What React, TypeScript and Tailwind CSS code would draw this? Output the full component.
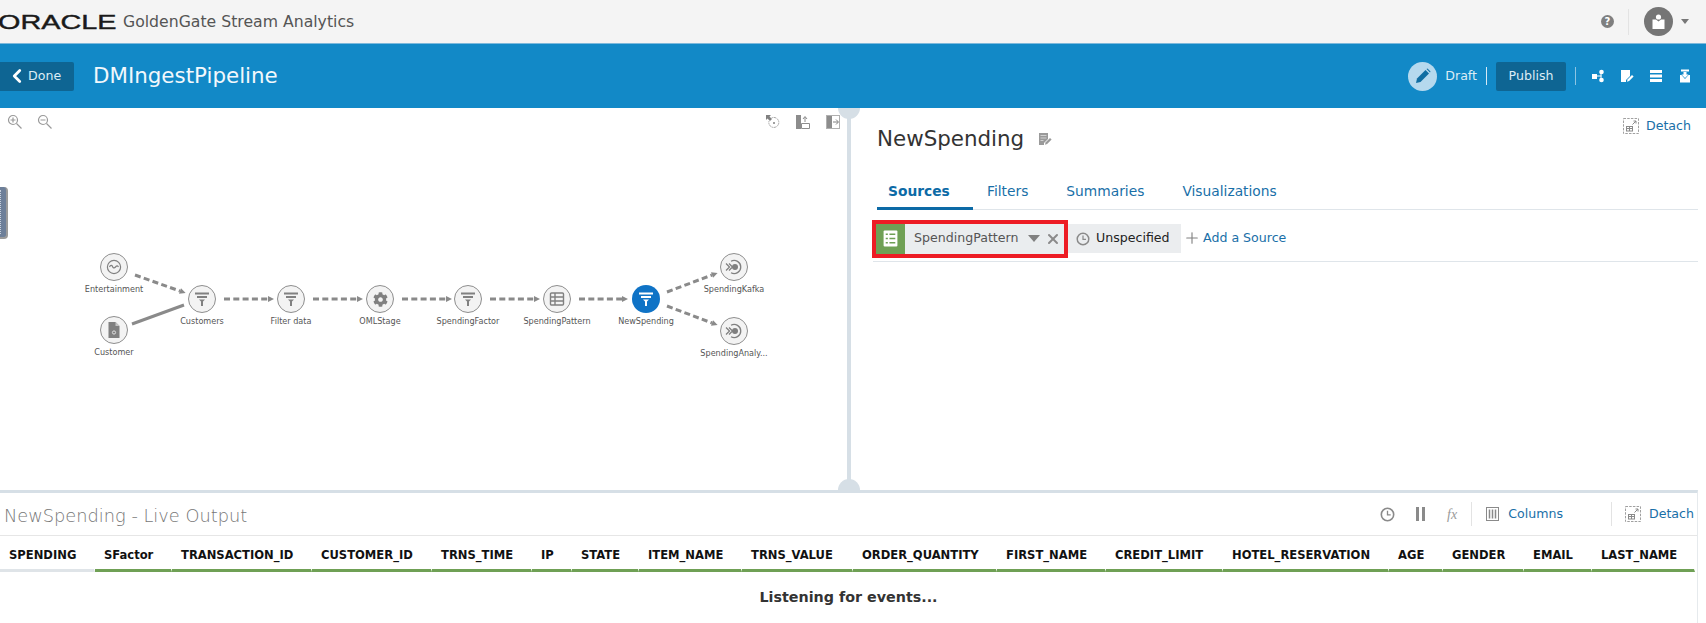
import { ChevronLeft, Plus, X } from 'lucide-react';
import { FaCog } from 'react-icons/fa';

const font = { fontFamily: '"DejaVu Sans", sans-serif' };

function FilterIcon({ light }: { light?: boolean }) {
  const c = light ? '#ffffff' : '#808080';
  return (
    <svg width="16" height="16" viewBox="0 0 16 16">
      <rect x="1" y="1.500" width="14" height="2" fill={c} />
      <rect x="3" y="5" width="10" height="2" fill={c} />
      <path d="M5 8.500h6l-2 2v4.500h-2v-4.500z" fill={c} />
    </svg>
  );
}

function TableIcon() {
  return (
    <svg width="16" height="16" viewBox="0 0 16 16" fill="none" stroke="#808080" strokeWidth="1.400">
      <rect x="1.500" y="2" width="13" height="12" rx="1" />
      <path d="M1.500 6h13M1.500 10h13M6 2v12" />
    </svg>
  );
}

function StreamIcon() {
  return (
    <svg width="16" height="16" viewBox="0 0 16 16" fill="none" stroke="#808080" strokeWidth="1.200">
      <circle cx="8" cy="8" r="6.600" />
      <path d="M3.500 8c1-2 2.400-2 3-.6s1.600 2.200 3 .6 2-1.400 3 0" />
    </svg>
  );
}

function FileIcon() {
  return (
    <svg width="16" height="18" viewBox="0 0 16 18">
      <path d="M2.500 1h7l4 4v12h-11z" fill="#808080" />
      <path d="M9.500 1v4h4" fill="#c4c4c4" />
      <circle cx="8" cy="11.500" r="1.600" fill="none" stroke="#e8e8e8" strokeWidth=".9" />
    </svg>
  );
}

function TargetIcon() {
  return (
    <svg width="18" height="16" viewBox="0 0 18 16" fill="none" stroke="#808080" strokeWidth="1.300">
      <path d="M6 2.200A6.600 6.600 0 1 1 6 13.800" />
      <circle cx="10" cy="8" r="3" fill="#808080" stroke="none" />
      <path d="M1 4.500 4.500 8 1 11.500M4 4.500 7.500 8 4 11.500" />
    </svg>
  );
}

const nodes = [
  { label: 'Entertainment', pos: 'left-[64px] top-[145px]', icon: <StreamIcon /> },
  { label: 'Customer', pos: 'left-[64px] top-[208px]', icon: <FileIcon /> },
  { label: 'Customers', pos: 'left-[152px] top-[177px]', icon: <FilterIcon /> },
  { label: 'Filter data', pos: 'left-[241px] top-[177px]', icon: <FilterIcon /> },
  { label: 'OMLStage', pos: 'left-[330px] top-[177px]', icon: <FaCog size={15} color="#808080" /> },
  { label: 'SpendingFactor', pos: 'left-[418px] top-[177px]', icon: <FilterIcon /> },
  { label: 'SpendingPattern', pos: 'left-[507px] top-[177px]', icon: <TableIcon /> },
  { label: 'NewSpending', pos: 'left-[596px] top-[177px]', icon: <FilterIcon light />, active: true },
  { label: 'SpendingKafka', pos: 'left-[684px] top-[145px]', icon: <TargetIcon /> },
  { label: 'SpendingAnaly...', pos: 'left-[684px] top-[209px]', icon: <TargetIcon /> },
];

const edges = [
  { x1: 135, y1: 167, x2: 180, y2: 183 },
  { x1: 132, y1: 216, x2: 184, y2: 197, solid: true },
  { x1: 224, y1: 191, x2: 268, y2: 191 },
  { x1: 313, y1: 191, x2: 357, y2: 191 },
  { x1: 402, y1: 191, x2: 446, y2: 191 },
  { x1: 490, y1: 191, x2: 534, y2: 191 },
  { x1: 579, y1: 191, x2: 622, y2: 191 },
  { x1: 667, y1: 184, x2: 712, y2: 167 },
  { x1: 667, y1: 198, x2: 712, y2: 215 },
];

const columns = [
  { name: 'SPENDING', w: 'w-[95px]', bar: 'border-b-[#dfe4e8]' },
  { name: 'SFactor', w: 'w-[77px]' },
  { name: 'TRANSACTION_ID', w: 'w-[140px]' },
  { name: 'CUSTOMER_ID', w: 'w-[120px]' },
  { name: 'TRNS_TIME', w: 'w-[100px]' },
  { name: 'IP', w: 'w-[40px]' },
  { name: 'STATE', w: 'w-[67px]' },
  { name: 'ITEM_NAME', w: 'w-[103px]' },
  { name: 'TRNS_VALUE', w: 'w-[111px]' },
  { name: 'ORDER_QUANTITY', w: 'w-[144px]' },
  { name: 'FIRST_NAME', w: 'w-[109px]' },
  { name: 'CREDIT_LIMIT', w: 'w-[117px]' },
  { name: 'HOTEL_RESERVATION', w: 'w-[166px]' },
  { name: 'AGE', w: 'w-[54px]' },
  { name: 'GENDER', w: 'w-[81px]' },
  { name: 'EMAIL', w: 'w-[68px]' },
  { name: 'LAST_NAME', w: 'w-[103px]' },
];

function DetachIcon() {
  return (
    <svg width="16" height="16" viewBox="0 0 16 16" fill="none" stroke="#8a8a8a" strokeWidth="1">
      <rect x=".5" y=".5" width="15" height="15" strokeDasharray="2.500 1.200" stroke="#a0a0a0" />
      <rect x="3.500" y="8.500" width="6" height="4.500" fill="#fff" />
      <path d="M3.500 10.500h6M6.500 8.500v4.500M9.500 6.500l3.500-3.500M10.500 3H13v2.500" />
    </svg>
  );
}

function EditDocIcon({ color }: { color: string }) {
  return (
    <svg width="14" height="14" viewBox="0 0 14 14">
      <path d="M1 1h9v6l-4 4v2H1z" fill={color} />
      <path d="M2.500 3.500h6M2.500 6h6M2.500 8.500h3" stroke="#fff" strokeWidth="1" opacity=".55" />
      <path d="M7 12.800 7.500 10.500 12 6l1.600 1.600-4.500 4.500z" fill={color} />
    </svg>
  );
}

function ClockIcon({ color, size }: { color: string; size: number }) {
  return (
    <svg width={size} height={size} viewBox="0 0 16 16" fill="none" stroke={color} strokeWidth="1.700">
      <circle cx="8" cy="8" r="6.600" />
      <path d="M8 4v4.400h3.400" strokeWidth="1.400" />
    </svg>
  );
}

function GraphIcon() {
  return (
    <svg width="14" height="14" viewBox="0 0 14 14" fill="#fff">
      <rect x="1" y="5" width="5" height="5" />
      <circle cx="10.500" cy="3" r="2.300" />
      <circle cx="10.500" cy="11" r="2.300" />
      <path d="M6 7h4.500M10 3v8" stroke="#fff" strokeWidth="1" />
    </svg>
  );
}

function ListIcon() {
  return (
    <svg width="14" height="14" viewBox="0 0 14 14" fill="#fff">
      <rect x="1" y="1" width="12" height="3" />
      <rect x="1" y="5.500" width="12" height="3" />
      <rect x="1" y="10" width="12" height="3" />
    </svg>
  );
}

function TrayIcon() {
  return (
    <svg width="14" height="14" viewBox="0 0 14 14" fill="#fff">
      <rect x="3" y="0.500" width="8" height="2" />
      <path d="M5.500 3h3v2.500h2L7 9 3.500 5.500h2z" />
      <path d="M2 6h1.500L7 10l3.500-4H12v7.500H2z" />
    </svg>
  );
}

export default function App() {
  return (
    <div className="w-[1706px] h-[623px] overflow-hidden bg-white" style={font}>
      <header className="h-[44px] bg-[#f4f4f4] border-b border-[#7db9dc] flex items-center overflow-hidden">
        <span className="w-[121px] shrink-0 -ml-[2px] origin-left scale-x-[1.44] text-[20px] leading-none text-[#1a1a1a] [-webkit-text-stroke:0.4px_#1a1a1a] [font-family:'Liberation_Sans',sans-serif]">
          ORACLE
        </span>
        <span className="ml-[4px] text-[15.7px] text-[#555555]">GoldenGate Stream Analytics</span>
        <div className="ml-auto flex items-center pr-[17px]">
          <span className="w-[13px] h-[13px] rounded-full bg-[#7f7f7f] text-white text-[10px] leading-[13px] font-bold text-center">?</span>
          <span className="ml-[14px] w-px h-[26px] bg-[#e3e3e3]" />
          <span className="ml-[15px] w-[29px] h-[29px] rounded-full bg-[#757575] flex items-center justify-center">
            <svg width="15" height="15" viewBox="0 0 15 15" fill="#fff">
              <circle cx="7.500" cy="3" r="2.600" />
              <path d="M1.500 5.500h3.500l2.500 2 2.500-2h3.500V15h-12z" />
            </svg>
          </span>
          <span className="ml-[8px] w-0 h-0 border-x-[4px] border-x-transparent border-t-[5px] border-t-[#777777]" />
        </div>
      </header>

      <div className="relative z-10 h-[64px] bg-[#1289c7] flex items-center">
        <button className="w-[74px] h-[29px] bg-[#0e6593] rounded-r-[2px] flex items-center pl-[6px] text-[12.6px]">
          <ChevronLeft size={22} strokeWidth={3} color="#fff" />
          <span className="text-[#dcecf5]">Done</span>
        </button>
        <h1 className="ml-[19px] text-[21.400px] leading-[28px] -mt-[1px] text-[#f2f8fc]">DMIngestPipeline</h1>
        <div className="ml-auto flex items-center pr-[14px]">
          <span className="w-[29px] h-[29px] rounded-full bg-[#b5d9ee] flex items-center justify-center">
            <svg width="16" height="16" viewBox="0 0 16 16" fill="#0f6ea3">
              <path d="M1 15l1-4.500L10.500 2 14 5.500 5.500 14z" />
              <path d="M11.500 1l1-.5 3 3-.5 1z" />
            </svg>
          </span>
          <span className="ml-[8px] text-[12.6px] text-[#dcecf5]">Draft</span>
          <span className="ml-[9px] w-px h-[18px] bg-[#d6e9f5]" />
          <button className="ml-[9px] w-[70px] h-[29px] bg-[#0e6593] rounded-[2px] text-[12.6px] text-[#dcecf5]">Publish</button>
          <span className="ml-[9px] w-px h-[18px] bg-[#8cc4e3]" />
          <span className="ml-[15px] flex items-center gap-[15px]">
            <GraphIcon />
            <EditDocIcon color="#ffffff" />
            <ListIcon />
            <TrayIcon />
          </span>
        </div>
      </div>

      <div className="h-[382px] flex">
        <section className="relative w-[847px] shrink-0">
          <div className="flex items-center justify-between pl-[7px] pt-[6px] pr-0">
            <div className="flex gap-[14px]">
              <svg width="16" height="16" viewBox="0 0 16 16" fill="none" stroke="#9a9a9a" strokeWidth="1.200">
                <circle cx="6" cy="6" r="4.500" />
                <path d="M6 3.500v5M3.500 6h5M9.500 9.500l5 5" />
              </svg>
              <svg width="16" height="16" viewBox="0 0 16 16" fill="none" stroke="#9a9a9a" strokeWidth="1.200">
                <circle cx="6" cy="6" r="4.500" />
                <path d="M3.500 6h5M9.500 9.500l5 5" />
              </svg>
            </div>
            <div className="flex gap-[16px] pr-[7px]">
              <svg width="14" height="14" viewBox="0 0 14 14" fill="none">
                <path d="M5.500 3a5 5 0 1 1-2.500 3" stroke="#a8a8a8" strokeWidth="1" strokeDasharray="2 .6" />
                <circle cx="8" cy="8" r="1" fill="#808080" />
                <path d="M0 0h5L3.500 1.500 6 4 4 6 1.500 3.500 0 5z" fill="#808080" />
              </svg>
              <svg width="14" height="14" viewBox="0 0 14 14" fill="none">
                <path d="M0 0h5v14H0z" fill="#8c8c8c" />
                <path d="M5.500 8.500h8V13.500H5.500z" stroke="#8c8c8c" />
                <path d="M9 7V2M7 4l2-2.500L11 4" stroke="#8c8c8c" />
              </svg>
              <svg width="14" height="14" viewBox="0 0 14 14" fill="none">
                <path d="M0 0h6v14H0z" fill="#8c8c8c" />
                <rect x=".5" y=".5" width="13" height="13" stroke="#b0b0b0" />
                <path d="M7 7h5M10 4.500 12.500 7 10 9.500" stroke="#808080" />
              </svg>
            </div>
          </div>

          <div className="absolute left-0 top-[79px] w-[8px] h-[52px] rounded-r-[4px] bg-[#6d7f99] border-r-[2px] border-b-[2px] border-[#9a9a9a]">
            <span className="absolute left-0 top-[3px] bottom-[3px] border-l border-dotted border-[#c8d0dc]" />
          </div>

          <svg className="absolute inset-0" width="847" height="382" fill="none">
            {edges.map(e => {
              const a = Math.atan2(e.y2 - e.y1, e.x2 - e.x1);
              const tx = e.x2 + Math.cos(a) * 6;
              const ty = e.y2 + Math.sin(a) * 6;
              const nx = Math.sin(a) * 3;
              const ny = Math.cos(a) * 3;
              return (
                <g key={`${e.x1}-${e.y1}`}>
                  <line x1={e.x1} y1={e.y1} x2={e.x2} y2={e.y2} stroke="#8a8a8a" strokeWidth="3" strokeDasharray={e.solid ? undefined : '6 3.300'} />
                  {!e.solid && <polygon points={`${tx},${ty} ${e.x2 + nx},${e.y2 - ny} ${e.x2 - nx},${e.y2 + ny}`} fill="#8a8a8a" />}
                </g>
              );
            })}
          </svg>

          {nodes.map(n => (
            <div key={n.label} className={`absolute w-[100px] flex flex-col items-center ${n.pos}`}>
              <div
                className={`w-[28px] h-[28px] rounded-full flex items-center justify-center ${
                  n.active ? 'bg-[#0f73c6]' : 'bg-[#f3f3f3] border-[1.5px] border-[#8e8e8e]'
                }`}
              >
                {n.icon}
              </div>
              <span className="mt-[2px] text-[8.1px] leading-[12px] text-[#555555] whitespace-nowrap">{n.label}</span>
            </div>
          ))}
        </section>

        <div className="relative w-[4px] shrink-0 bg-[#d6dfe6]">
          <span className="absolute -left-[9px] -top-[11px] w-[22px] h-[22px] rounded-full bg-[#d6dfe6]" />
          <span className="absolute -left-[9px] -bottom-[11px] w-[22px] h-[22px] rounded-full bg-[#d6dfe6]" />
        </div>

        <section className="flex-1 min-w-0 pl-[26px] pr-[8px] overflow-hidden">
          <div className="h-[61px] flex items-start relative">
            <h2 className="mt-[17px] text-[21.4px] leading-[28px] text-[#333333]">NewSpending</h2>
            <span className="ml-[14px] mt-[24px]">
              <EditDocIcon color="#9a9a9a" />
            </span>
            <div className="ml-auto mt-[9px] flex items-center pr-[7px]">
              <DetachIcon />
              <span className="ml-[7px] text-[12.6px] text-[#196fa8]">Detach</span>
            </div>
          </div>

          <nav className="h-[41px] flex border-b border-[#dfe5ea] text-[13.8px] text-[#196fa8]">
            <span className="w-[96px] h-[41px] pl-[11px] pt-[12px] font-bold text-[#0c6aa6] border-b-[3px] border-[#0c6aa6]">Sources</span>
            <span className="ml-[14px] pt-[12px]">Filters</span>
            <span className="ml-[38px] pt-[12px]">Summaries</span>
            <span className="ml-[38px] pt-[12px]">Visualizations</span>
          </nav>

          <div className="h-[52px] -ml-[4px] pt-[6px] flex items-center border-b border-[#dfe5ea]">
            <div className="-ml-[1px] w-[196px] h-[38px] border-[4px] border-[#ed1c24] flex shrink-0">
              <span className="w-[29px] bg-[#6fa055] flex items-center justify-center">
                <svg width="15" height="17" viewBox="0 0 14 16">
                  <rect x=".5" y=".5" width="13" height="15" rx="1" fill="#ffffff" />
                  <path d="M2.500 4h2M6 4h5.500M2.500 8h2M6 8h5.500M2.500 12h2M6 12h5.500" stroke="#6fa055" strokeWidth="1.500" />
                </svg>
              </span>
              <span className="flex-1 bg-[#eaedef] flex items-center pl-[9px] text-[12.6px] text-[#555555]">
                SpendingPattern
                <span className="ml-[9px] w-0 h-0 border-x-[6px] border-x-transparent border-t-[7px] border-t-[#808080]" />
                <X size={16} strokeWidth={3} color="#8a8a8a" className="ml-[5px]" />
              </span>
            </div>
            <div className="w-[113px] h-[29px] bg-[#ebedef] flex items-center pl-[8px] text-[12.6px] text-[#222222] shrink-0">
              <ClockIcon color="#8a8a8a" size={14} />
              <span className="ml-[6px]">Unspecified</span>
            </div>
            <span className="ml-[2px] flex items-center text-[12.6px] text-[#196fa8]">
              <Plus size={18} strokeWidth={1.500} color="#808080" />
              <span className="ml-[2px]">Add a Source</span>
            </span>
          </div>
        </section>
      </div>

      <div className="relative z-10 bg-white w-[1698px] border-t-[3px] border-r border-t-[#d6dfe6] border-r-[#e6eaed] h-[133px]">
        <div className="h-[43px] flex items-center border-b border-[#e6e6e6]">
          <span className="ml-[4px] pt-[5px] text-[17.8px] font-extralight text-[#777777]">NewSpending - Live Output</span>
          <div className="ml-auto flex items-center pr-[3px]">
            <ClockIcon color="#8a8a8a" size={15} />
            <span className="ml-[21px] flex gap-[3px]">
              <span className="w-[3px] h-[14px] bg-[#8a8a8a]" />
              <span className="w-[3px] h-[14px] bg-[#8a8a8a]" />
            </span>
            <span className="ml-[22px] text-[14px] italic text-[#9a9a9a] [font-family:'Liberation_Serif',serif]">fx</span>
            <span className="ml-[14px] w-px h-[24px] bg-[#e3e3e3]" />
            <svg className="ml-[14px]" width="13" height="14" viewBox="0 0 13 14" fill="none" stroke="#8a8a8a">
              <rect x=".5" y=".5" width="12" height="13" />
              <path d="M3.500 2.500v9M6.500 2.500v9M9.500 2.500v9" strokeWidth="1.500" />
            </svg>
            <span className="ml-[9px] text-[12.6px] text-[#196fa8]">Columns</span>
            <span className="ml-[48px] w-px h-[24px] bg-[#e3e3e3]" />
            <span className="ml-[13px]">
              <DetachIcon />
            </span>
            <span className="ml-[8px] text-[12.6px] text-[#196fa8]">Detach</span>
          </div>
        </div>
        <div className="flex h-[36px]">
          {columns.map(c => (
            <div
              key={c.name}
              className={`${c.w} shrink-0 pl-[9px] pt-[11px] text-[11.55px] leading-[16px] font-bold text-[#111111] whitespace-nowrap border-b-[3px] border-r border-r-white ${
                c.bar ?? 'border-b-[#6fa055]'
              }`}
            >
              {c.name}
            </div>
          ))}
        </div>
        <p className="pt-[16px] text-center text-[14.3px] leading-[18px] font-bold text-[#333333]">Listening for events...</p>
      </div>
    </div>
  );
}
